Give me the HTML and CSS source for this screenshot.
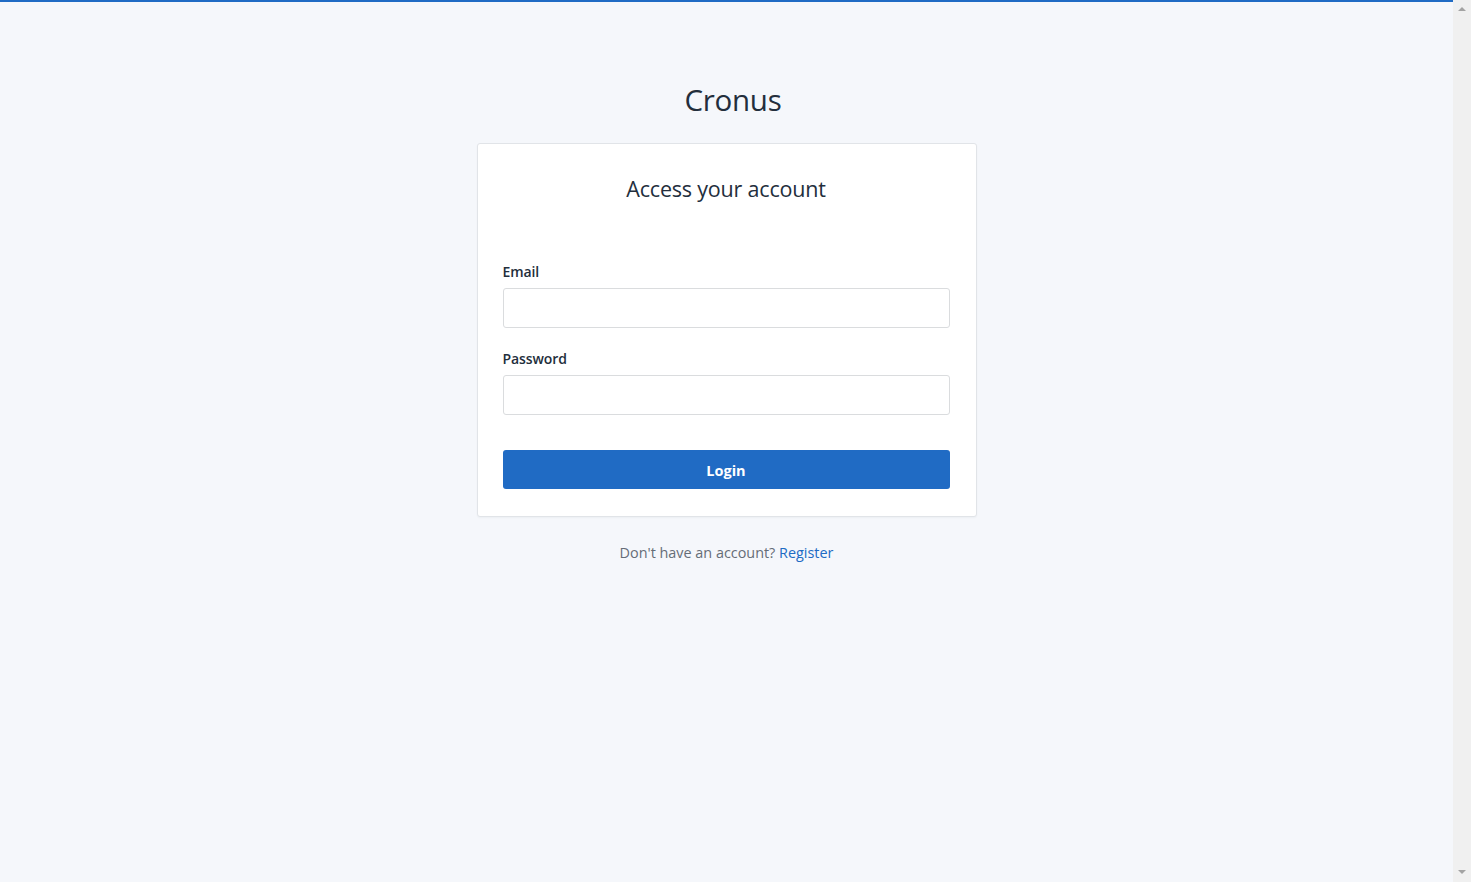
FILE: index.html
```html
<!DOCTYPE html>
<html lang="en">
<head>
<meta charset="utf-8">
<title>Cronus - Login</title>
<link rel="stylesheet" href="styles.css">
</head>
<body>
<div class="page">
  <div class="container">
    <div class="brand">Cronus</div>
    <form class="card">
      <h2 class="card-title">Access your account</h2>
      <div class="field">
        <label class="label" for="email">Email</label>
        <input class="input" id="email" type="email">
      </div>
      <div class="field">
        <label class="label" for="password">Password</label>
        <input class="input" id="password" type="password">
      </div>
      <div class="footer">
        <button class="btn" type="button">Login</button>
      </div>
    </form>
    <div class="hint">Don't have an account? <a href="#" class="link">Register</a></div>
  </div>
</div>
<div class="scrollbar">
  <span class="arrow up"></span>
  <span class="arrow down"></span>
</div>
</body>
</html>
```

FILE: styles.css
```css
html, body {
  margin: 0;
  height: 100%;
  overflow: hidden;
}
body {
  display: flex;
  font-family: "Open Sans", "Noto Sans", sans-serif;
  color: #232e3c;
  background: #f5f7fb;
}
.page {
  flex: 1;
  border-top: 2px solid #206bc4;
  background: #f5f7fb;
}
.container {
  width: 500px;
  margin: 0 auto;
  padding-top: 80px;
  display: flex;
  flex-direction: column;
  align-items: stretch;
}
.brand {
  text-align: center;
  font-size: 29.5px;
  font-weight: 500;
  line-height: 36px;
  margin-bottom: 25px;
  padding-left: 13px;
  letter-spacing: -0.3px;
}
.card {
  background: #fff;
  border: 1px solid #e1e4e8;
  border-radius: 3px;
  box-shadow: 0 1px 2px rgba(35, 46, 60, 0.04);
  padding: 31px 26px 27px 25px;
  display: flex;
  flex-direction: column;
}
.card-title {
  margin: 0 0 59px;
  text-align: center;
  font-size: 21.5px;
  font-weight: 500;
  line-height: 28px;
  letter-spacing: -0.2px;
}
.field {
  display: flex;
  flex-direction: column;
  margin-bottom: 21px;
}
.label {
  font-size: 14px;
  font-weight: 600;
  line-height: 20px;
  margin-bottom: 6px;
  letter-spacing: -0.1px;
}
.input {
  height: 40px;
  box-sizing: border-box;
  border: 1px solid #dadcde;
  border-radius: 3px;
  background: #fff;
  font: inherit;
  padding: 0 12px;
  outline: none;
}
.footer {
  margin-top: 14px;
}
.btn {
  width: 100%;
  height: 39px;
  border: 0;
  border-radius: 3px;
  background: #206bc4;
  color: #fff;
  font-family: inherit;
  font-size: 14.5px;
  font-weight: 700;
  padding: 2px 0 0;
  cursor: pointer;
}
.hint {
  text-align: center;
  margin-top: 26px;
  font-size: 14.4px;
  line-height: 20px;
  color: #656d77;
}
.link {
  color: #206bc4;
  text-decoration: none;
}
.scrollbar {
  width: 18px;
  background: #f0f0f0;
  display: flex;
  flex-direction: column;
  justify-content: space-between;
  align-items: center;
  padding: 7px 0 8px;
  box-sizing: border-box;
}
.arrow {
  width: 0;
  height: 0;
  border-left: 4px solid transparent;
  border-right: 4px solid transparent;
}
.arrow.up {
  border-bottom: 4px solid #a3a3a3;
}
.arrow.down {
  border-top: 4px solid #a3a3a3;
}
```
